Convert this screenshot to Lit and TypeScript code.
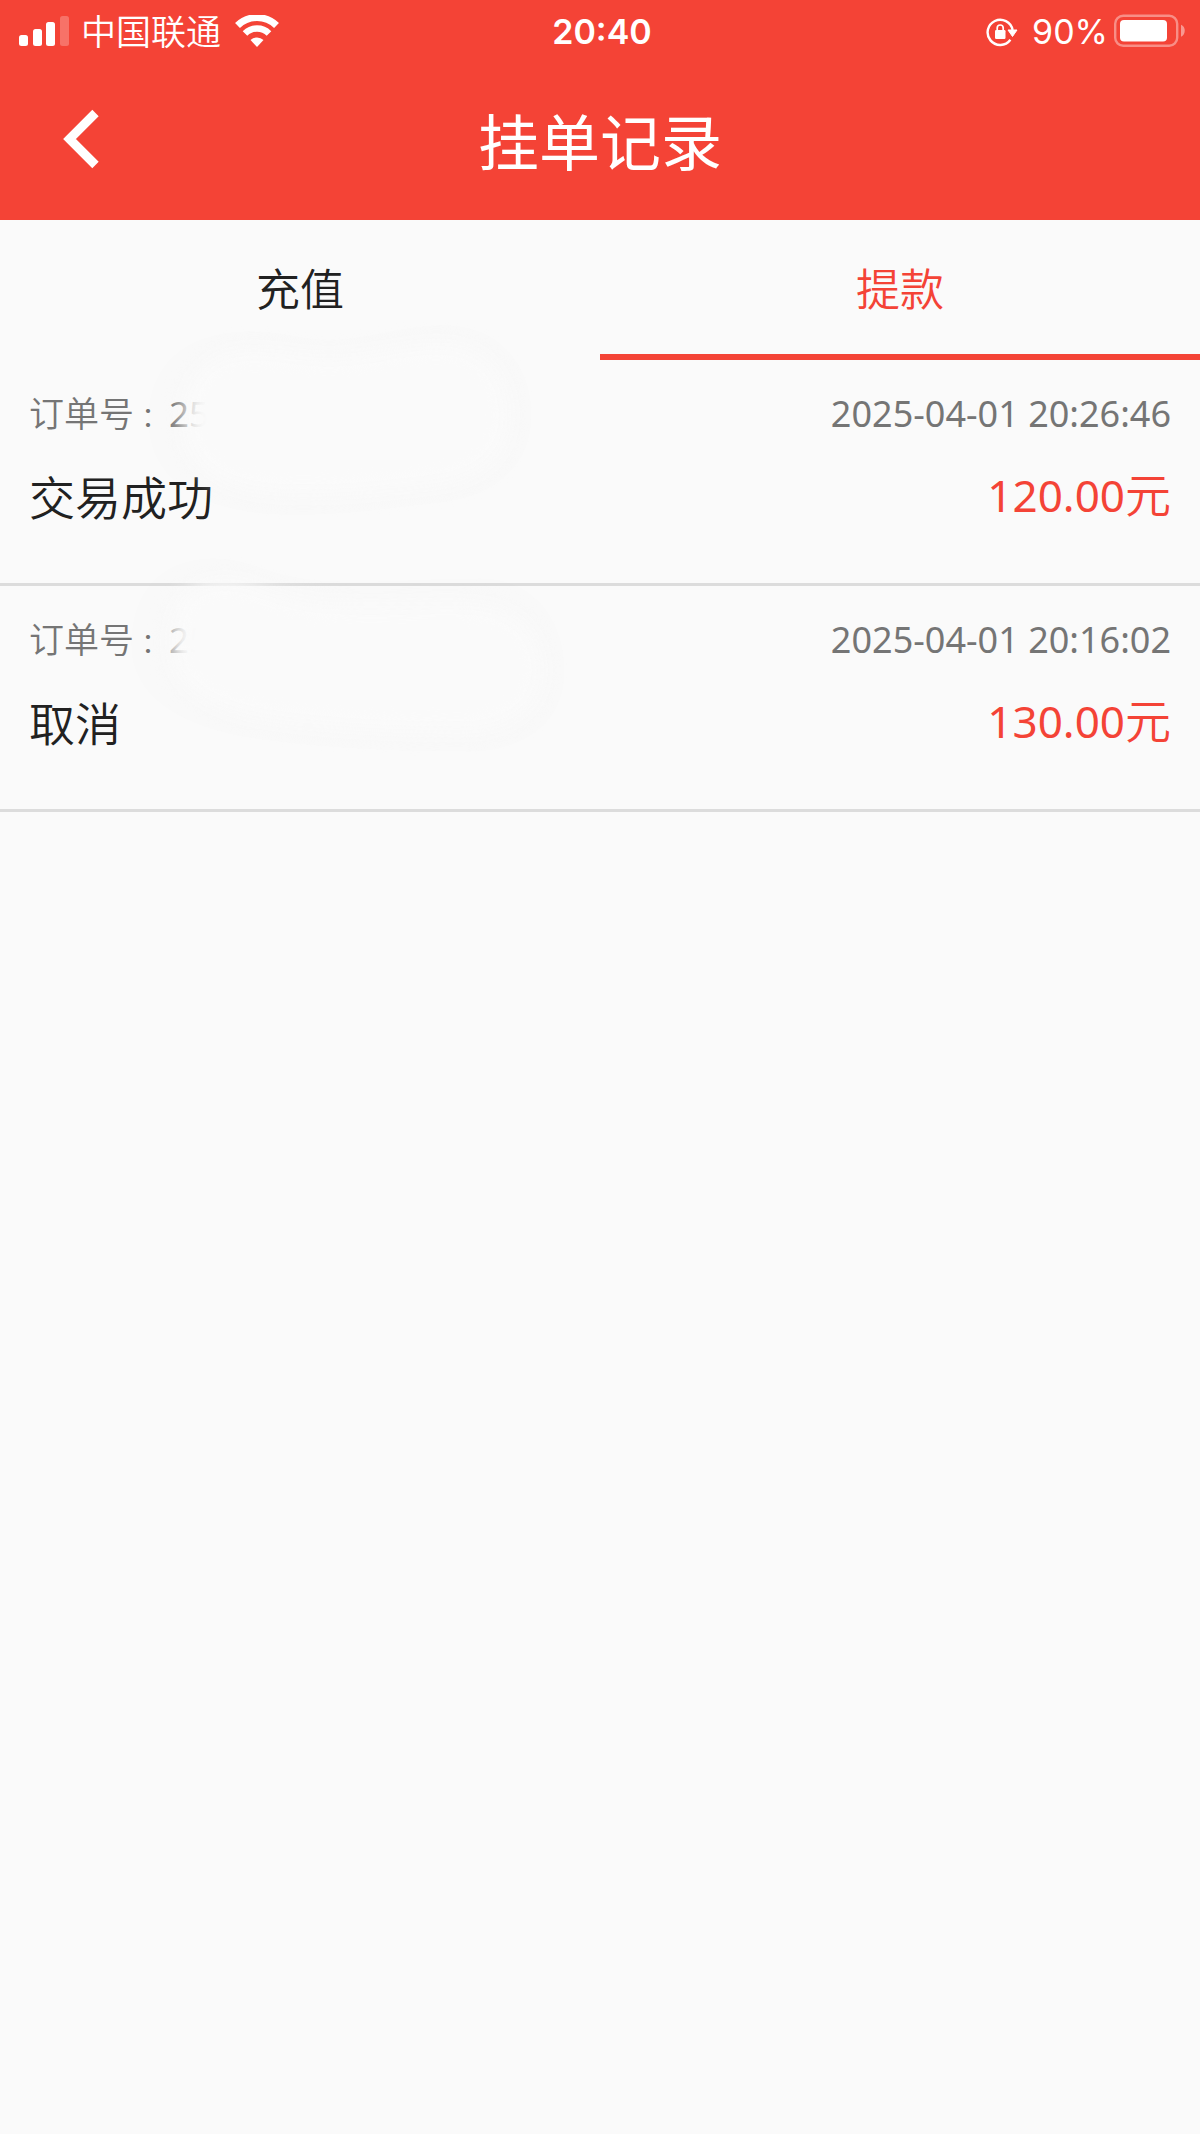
import { LitElement, html, css } from "lit";
import { customElement, property, state } from "lit/decorators.js";

interface Order {
  no: string;
  time: string;
  status: string;
  amount: string;
  edge: string;
  cover: string;
}

const RED = css`#f44336`;

@customElement("status-bar")
export class StatusBar extends LitElement {
  static styles = css`
    :host {
      display: grid;
      grid-template-columns: 1fr auto 1fr;
      align-items: center;
      height: 60px;
      padding: 0 14px 0 18px;
      color: #fff;
      font-family: Inter, "Noto Sans CJK SC", sans-serif;
      font-size: 34px;
      line-height: 60px;
    }
    .side {
      display: flex;
      align-items: center;
    }
    .end {
      justify-content: flex-end;
    }
    .carrier {
      margin: 0 14px 4px 11px;
      font-family: "Noto Sans CJK SC", sans-serif;
      font-size: 35px;
      font-weight: 350;
    }
    .time {
      font-weight: 600;
    }
    .percent {
      margin: 0 6px 0 14px;
    }
    svg {
      display: block;
      flex: none;
    }
  `;

  render() {
    return html`
      <div class="side">
        <svg width="52" height="32" viewBox="0 0 52 32" fill="#fff" aria-hidden="true">
          <rect x="1" y="19" width="9" height="11" rx="2.5" />
          <rect x="15" y="13" width="9" height="17" rx="2.5" />
          <rect x="28" y="6" width="9" height="24" rx="2.5" />
          <rect x="42" y="0" width="9" height="30" rx="2.5" opacity="0.25" />
        </svg>
        <span class="carrier">中国联通</span>
        <svg width="44" height="34" viewBox="0 0 44 34" aria-hidden="true">
          <path d="M2.500 10.500a28 28 0 0 1 39 0" fill="none" stroke="#fff" stroke-width="7" />
          <path d="M10 18.500a17 17 0 0 1 24 0" fill="none" stroke="#fff" stroke-width="6.5" />
          <path d="M15.5 25a9.4 9.4 0 0 1 13 0L22 32Z" fill="#fff" />
        </svg>
      </div>
      <span class="time">20:40</span>
      <div class="side end">
        <svg width="32" height="30" viewBox="0 0 32 30" aria-hidden="true">
          <path d="M24.4 22.8A12.6 12.6 0 1 1 26.6 13" fill="none" stroke="#fff" stroke-width="2.4" />
          <path d="M22 13h9l-4.5 6.5Z" fill="#fff" stroke="#fff" stroke-linejoin="round" />
          <rect x="9" y="13" width="10.5" height="9" rx="1.2" fill="#fff" />
          <path d="M11.2 14v-3a3 3 0 0 1 6 0v3" fill="none" stroke="#fff" stroke-width="1.7" />
        </svg>
        <span class="percent">90%</span>
        <svg width="72" height="36" viewBox="0 0 72 36" aria-hidden="true">
          <rect x="1.2" y="1.7" width="62" height="30" rx="8" fill="none" stroke="#fff" stroke-width="2.4" opacity="0.4" />
          <rect x="6" y="6" width="47" height="21.5" rx="4" fill="#fff" />
          <path d="M67 10.8c5 1.8 5 10 0 12Z" fill="#fff" opacity="0.45" />
        </svg>
      </div>
    `;
  }
}

@customElement("order-row")
export class OrderRow extends LitElement {
  @property({ attribute: false }) order!: Order;

  static styles = css`
    :host {
      display: block;
      position: relative;
      padding: 26px 29px 54px;
      border-bottom: 3px solid #dcdcdc;
      font-family: "Noto Sans", "Noto Sans CJK SC", sans-serif;
    }
    .line {
      display: flex;
      justify-content: space-between;
    }
    .meta {
      align-items: baseline;
      height: 52px;
      line-height: 52px;
      font-size: 35px;
      color: #757575;
    }
    .label {
      font-family: "Noto Sans CJK SC", sans-serif;
      font-weight: 350;
    }
    .colon {
      padding-left: 7px;
      font-size: 28px;
    }
    .number {
      display: flex;
      align-items: baseline;
    }
    .time {
      font-size: 36px;
    }
    .main {
      align-items: flex-start;
      height: 68px;
      margin-top: 23px;
      font-size: 46px;
      line-height: 68px;
      color: #212121;
    }
    .status,
    .unit {
      font-family: "Noto Sans CJK SC", sans-serif;
      font-weight: 350;
    }
    .amount {
      line-height: 62px;
      color: ${RED};
    }
    .value {
      font-size: 44px;
    }
    .veil {
      position: absolute;
      left: 0;
      top: 0;
      width: 600px;
      height: 200px;
      overflow: visible;
      pointer-events: none;
    }
  `;

  render() {
    const { no, time, status, amount, edge, cover } = this.order;
    return html`
      <div class="line meta">
        <span class="number"
          ><span class="label">订单号<span class="colon">：</span></span><span>${no}</span></span
        >
        <time class="time">${time}</time>
      </div>
      <div class="line main">
        <span class="status">${status}</span>
        <span class="amount"><span class="value">${amount}</span><span class="unit">元</span></span>
      </div>
      <svg class="veil" viewBox="0 0 600 200" aria-hidden="true">
        <defs>
          <filter id="soft" x="-20%" y="-20%" width="140%" height="140%" color-interpolation-filters="sRGB">
            <feGaussianBlur stdDeviation="10" />
          </filter>
        </defs>
        <path d=${edge} fill="#000" opacity="0.004" />
        <path d=${cover} fill="#fafafa" filter="url(#soft)" />
      </svg>
    `;
  }
}

@customElement("app-root")
export class AppRoot extends LitElement {
  @state() private active = 1;

  private tabs = ["充值", "提款"];

  private orders: Order[] = [
    {
      no: "25",
      time: "2025-04-01 20:26:46",
      status: "交易成功",
      amount: "120.00",
      edge: "M148 60C148 0 190-29 250-29C290-29 300-19 340-21C380-24 400-35 445-35C500-35 532 5 532 55C532 110 490 138 440 143C390 148 350 156 290 155C200 155 148 120 148 60Z",
      cover: "M183 60C183 20 205-10 250-10C290-10 300-2 340-4C380-6 400-16 440-16C485-16 510 15 510 55C510 98 480 120 435 125C390 130 350 136 290 135C215 133 183 105 183 60Z",
    },
    {
      no: "25",
      time: "2025-04-01 20:16:02",
      status: "取消",
      amount: "130.00",
      edge: "M131 60C131 0 165-28 215-28C250-28 270-10 320-6C370-2 420-8 480-8C540-8 565 40 565 85C565 140 520 166 470 166C400 166 330 163 270 155C180 145 131 110 131 60Z",
      cover: "M170 60C170 20 185-6 225-6C255-6 275 12 320 17C370 20 420 17 470 18C520 20 543 50 543 85C543 125 505 146 465 146C400 146 330 143 275 135C200 125 170 95 170 60Z",
    },
  ];

  static styles = css`
    :host {
      display: block;
      min-height: 100vh;
      background: #fafafa;
      font-family: "Noto Sans CJK SC", sans-serif;
    }
    .top {
      background: ${RED};
      color: #fff;
    }
    .bar {
      display: grid;
      grid-template-columns: 1fr auto 1fr;
      align-items: center;
      height: 160px;
      padding: 0 47px;
    }
    .back {
      justify-self: start;
      width: 68px;
      height: 80px;
      margin-bottom: 2px;
      padding: 0;
      border: 0;
      background: none;
      color: inherit;
    }
    .back svg {
      display: block;
      margin: auto;
    }
    h1 {
      margin: 0;
      font-size: 61px;
      font-weight: 400;
      line-height: 80px;
    }
    .tabs {
      display: grid;
      grid-template-columns: 1fr 1fr;
    }
    .tab {
      height: 140px;
      padding: 0;
      border: 0;
      border-bottom: 6px solid transparent;
      background: none;
      color: #212121;
      font: inherit;
      font-size: 44px;
      font-weight: 350;
    }
    .tab[aria-selected="true"] {
      border-color: ${RED};
      color: ${RED};
    }
  `;

  render() {
    return html`
      <header class="top">
        <status-bar></status-bar>
        <div class="bar">
          <button class="back" aria-label="返回">
            <svg width="36" height="60" viewBox="0 0 36 60" fill="none" stroke="currentColor" stroke-width="9">
              <path d="M32.5 4 6.500 30l26 26" />
            </svg>
          </button>
          <h1>挂单记录</h1>
        </div>
      </header>
      <nav class="tabs" role="tablist">
        ${this.tabs.map(
          (tab, i) => html`<button
            class="tab"
            role="tab"
            aria-selected=${i === this.active ? "true" : "false"}
            @click=${() => (this.active = i)}
          >${tab}</button>`
        )}
      </nav>
      <main>
        ${this.orders.map((order) => html`<order-row .order=${order}></order-row>`)}
      </main>
    `;
  }
}
